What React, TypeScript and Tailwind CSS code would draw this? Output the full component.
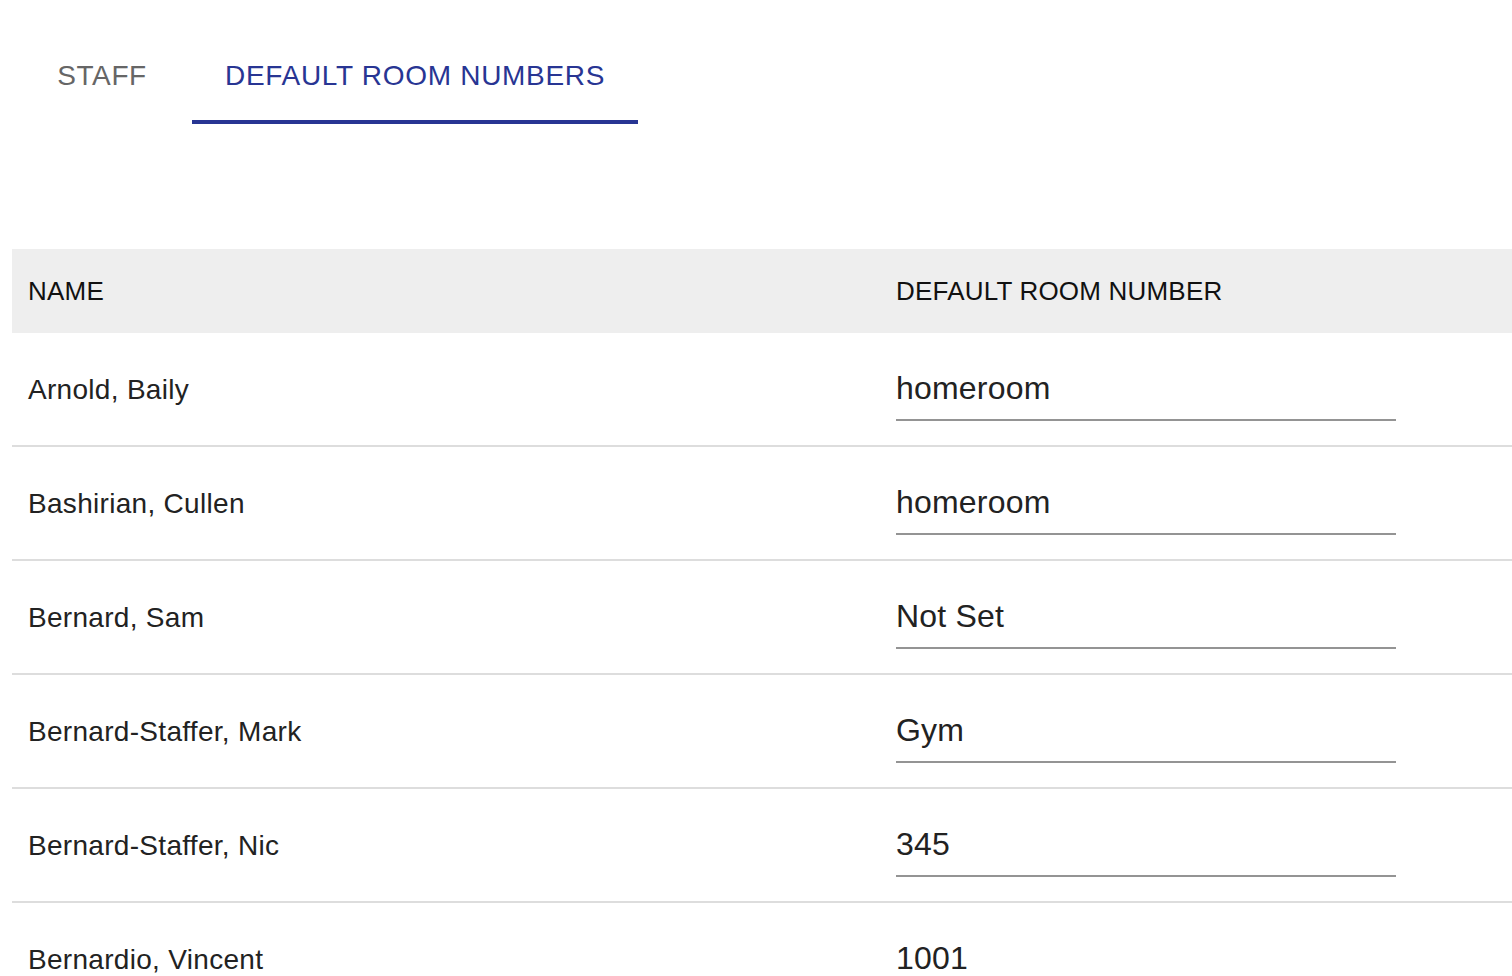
import React from "react";

const rows: { name: string; room: string }[] = [
  { name: "Arnold, Baily", room: "homeroom" },
  { name: "Bashirian, Cullen", room: "homeroom" },
  { name: "Bernard, Sam", room: "Not Set" },
  { name: "Bernard-Staffer, Mark", room: "Gym" },
  { name: "Bernard-Staffer, Nic", room: "345" },
  { name: "Bernardio, Vincent", room: "1001" },
];

export default function App() {
  return (
    <div className="w-[1512px] h-[976px] overflow-hidden bg-white font-['Liberation_Sans',Arial,sans-serif]">
      {/* tabs */}
      <div className="flex pl-3 pt-[28px]">
        <button className="w-[180px] h-[96px] pt-[4px] flex items-center justify-center text-[28px] tracking-[0.6px] text-[#666666] border-b-4 border-transparent">
          STAFF
        </button>
        <button className="h-[96px] px-[33px] pt-[4px] flex items-center justify-center text-[28px] tracking-[0.7px] text-[#283593] border-b-4 border-[#283593]">
          DEFAULT ROOM NUMBERS
        </button>
      </div>

      {/* table */}
      <div className="ml-3 mt-[125px] w-[1540px]">
        <div className="grid grid-cols-[868px_1fr] h-[84px] bg-[#eeeeee] text-[26px] tracking-[0.2px] text-[#111111]">
          <div className="flex items-center pl-4">NAME</div>
          <div className="flex items-center pl-4">DEFAULT ROOM NUMBER</div>
        </div>

        {rows.map(({ name, room }) => (
          <div
            key={name}
            className="grid grid-cols-[868px_1fr] h-[114px] border-b-2 border-[#dddddd]"
          >
            <div className="pl-4 pt-[41px] text-[28px] leading-[32px] tracking-[0.3px] text-[#222222]">
              {name}
            </div>
            <div className="pl-4 pt-[36px]">
              <input
                readOnly
                value={room}
                className="block w-[500px] h-[52px] pb-[12px] text-[32px] tracking-[0.2px] text-[#222222] border-b-2 border-[#949494] outline-none bg-transparent"
              />
            </div>
          </div>
        ))}
      </div>
    </div>
  );
}
